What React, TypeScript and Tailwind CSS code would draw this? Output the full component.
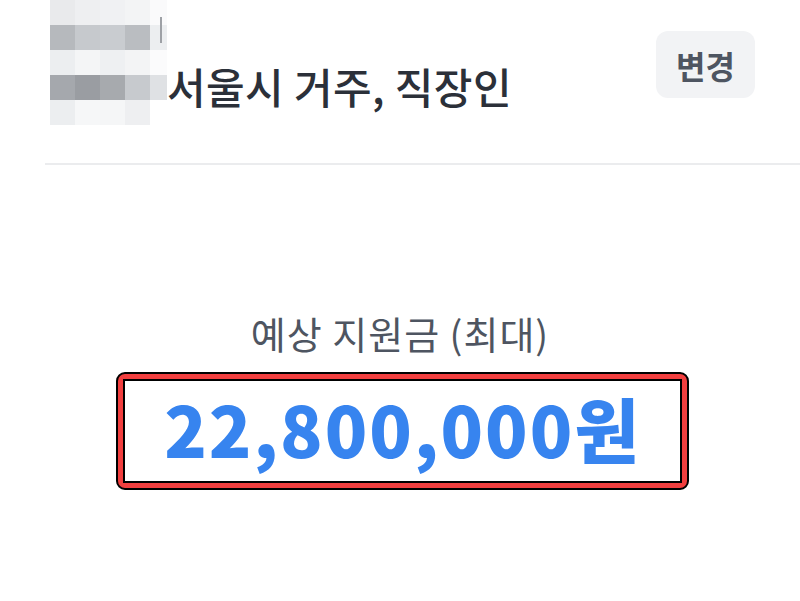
const font = { fontFamily: '"Noto Sans CJK KR", "Noto Sans", sans-serif' }

// pixelated (blurred) name area, one row per band
const mosaic: string[][] = [
  ["#e9eaec", "#eeeff1", "#f0f1f3", "#f3f4f5", "#fafafb"],
  ["#b6b9bd", "#c6c9cd", "#c9ccd0", "#babdc1", "#eceef0"],
  ["#eceef0", "#f4f5f6", "#eef0f2", "#f3f4f5", "#fbfbfc"],
  ["#a5a8ad", "#9a9da2", "#a7aaae", "#c7cace", "#dfe1e4"],
  ["#eceef0", "#f6f7f8", "#f5f6f7", "#eeeff1", "#ffffff"],
]

function Mosaic() {
  return (
    <div className="flex flex-col">
      {mosaic.map((row, i) => (
        <div key={i} className="flex h-[25px]">
          {row.map((c, j) => (
            <div
              key={j}
              className={j === 4 ? "relative w-[17px]" : "w-[25px]"}
              style={{ backgroundColor: c }}
            >
              {i === 1 && j === 4 && <div className="absolute left-[10px] top-[-8px] h-[26px] w-[2px] bg-[#9ea1a6]" />}
            </div>
          ))}
        </div>
      ))}
    </div>
  )
}

export default function App() {
  return (
    <div className="h-[601px] w-[800px] overflow-hidden bg-white" style={font}>
      <div className="flex items-start pl-[50px] pr-[45px]">
        <Mosaic />
        <div className="pt-[60px] text-[42px] font-medium leading-[52px] tracking-[0.4px] text-[#2b3039]">
          서울시 거주, 직장인
        </div>
        <button className="ml-auto mt-[31px] flex h-[67px] w-[99px] items-center justify-center rounded-[12px] bg-[#f2f3f5] text-[32px] font-semibold text-[#4e5561]">
          변경
        </button>
      </div>

      <div className="ml-[45px] mt-[38px] h-[2px] bg-[#ebecee]" />

      <div className="flex flex-col items-center pt-[146px]">
        <div className="text-[38px] leading-[44px] tracking-[1px] text-[#4e5561]">예상 지원금 (최대)</div>
        <div className="ml-[5px] mt-[17px] rounded-[9px] border-2 border-black bg-[#f23f3f] p-[5px]">
          <div className="flex h-[104px] w-[559px] items-center justify-center border-2 border-black bg-white pb-[6px]">
            <span className="text-[70px] font-extrabold leading-none tracking-[2px] text-[#3784ef]">22,800,000원</span>
          </div>
        </div>
      </div>
    </div>
  )
}
